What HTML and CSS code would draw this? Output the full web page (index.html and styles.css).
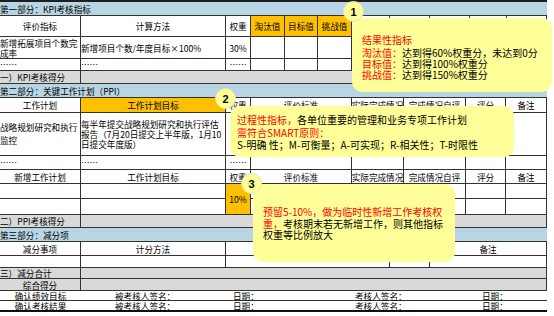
FILE: index.html
```html
<!DOCTYPE html>
<html lang="zh-CN">
<head>
<meta charset="utf-8">
<title>KPI考核表</title>
<link rel="stylesheet" href="styles.css">
</head>
<body>
<div class="page">
  <div class="sheet">
    <div class="topbar"></div>

    <div class="title h14">第一部分：KPI考核指标</div>
    <div class="row g1 h21">
      <div class="ctr">评价指标</div><div class="ctr">计算方法</div><div class="ctr">权重</div>
      <div class="ctr org">淘汰值</div><div class="ctr org">目标值</div><div class="ctr org">挑战值</div>
      <div></div><div></div><div></div><div></div><div></div>
    </div>
    <div class="row g1 h22">
      <div>新增拓展项目个数完<br>成率</div><div>新增项目个数/年度目标×100%</div><div class="ctr">30%</div>
      <div></div><div></div><div></div><div></div><div></div><div></div><div></div><div></div>
    </div>
    <div class="row g1 h12">
      <div class="dots">……</div><div class="dots">……</div><div class="dots ctr">……</div>
      <div></div><div></div><div></div><div></div><div></div><div></div><div></div><div></div>
    </div>
    <div class="row gs h13 gray"><div>一）KPI考核得分</div><div></div></div>

    <div class="title h14">第二部分：关键工作计划（PPI）</div>
    <div class="row g2 h15">
      <div class="ctr">工作计划</div><div class="ctr org">工作计划目标</div><div class="ctr">权重</div>
      <div class="ctr">评价标准</div><div class="ctr">实际完成情况</div><div class="ctr">完成情况自评</div>
      <div class="ctr">评分</div><div class="ctr">备注</div>
    </div>
    <div class="row g2 h43">
      <div class="lh13">战略规划研究和执行<br>监控</div>
      <div>每半年提交战略规划研究和执行评估<br>报告（7月20日提交上半年版，1月10<br>日提交年度版）</div>
      <div></div><div></div><div></div><div></div><div></div><div></div>
    </div>
    <div class="row g2 h14">
      <div class="dots">……</div><div class="dots">……</div><div class="dots ctr">……</div>
      <div></div><div></div><div></div><div></div><div></div>
    </div>
    <div class="block g2">
      <div class="ctr">新增工作计划</div><div class="ctr">工作计划目标</div><div class="ctr">权重</div>
      <div class="ctr">评价标准</div><div class="ctr">实际完成情况</div><div class="ctr">完成情况自评</div>
      <div class="ctr">评分</div><div class="ctr">备注</div>
      <div></div><div></div><div class="ctr org span2">10%</div><div></div><div></div><div></div><div></div><div></div>
      <div></div><div></div><div></div><div></div><div></div><div></div><div></div>
    </div>
    <div class="row gs h13 gray"><div>二）PPI考核得分</div><div></div></div>

    <div class="title h14">第三部分：减分项</div>
    <div class="row g3 h14">
      <div class="ctr">减分事项</div><div class="ctr">计分方法</div><div class="ctr">扣分标准</div><div class="ctr">扣分</div><div class="ctr">备注</div>
    </div>
    <div class="row g3 h12">
      <div></div><div></div><div></div><div></div><div></div>
    </div>
    <div class="row gs h11 gray"><div>三）减分合计</div><div></div></div>
    <div class="row gs h12 gray"><div class="ctr">综合得分</div><div></div></div>
    <div class="sign h10">
      <div class="ctr">确认绩效目标</div><div class="ind">被考核人签名：</div><div>日期：</div><div>考核人签名：</div><div>日期：</div>
    </div>
    <div class="sign h10 last">
      <div class="ctr">确认考核结果</div><div class="ind">被考核人签名：</div><div>日期：</div><div>考核人签名：</div><div>日期：</div>
    </div>
  </div>

  <div class="tip tip1">
    <p class="red first">结果性指标</p>
    <p><span class="red">淘汰值：</span>达到得60%权重分，未达到0分</p>
    <p><span class="red">目标值：</span>达到得100%权重分</p>
    <p><span class="red">挑战值：</span>达到得150%权重分</p>
  </div>
  <div class="tip tip2">
    <p><span class="red">过程性指标，</span>各单位重要的管理和业务专项工作计划</p>
    <p class="red">需符合SMART原则：</p>
    <p>S-明确 性；M-可衡量；A-可实现；R-相关性；T-时限性</p>
  </div>
  <div class="tip tip3">
    <p class="red">预留5-10%，做为临时性新增工作考核权</p>
    <p><span class="red">重，</span>考核期末若无新增工作，则其他指标</p>
    <p>权重等比例放大</p>
  </div>

  <div class="badge b1">1</div>
  <div class="badge b2">2</div>
  <div class="badge b3">3</div>
</div>
</body>
</html>
```

FILE: styles.css
```css
* { box-sizing: border-box; margin: 0; padding: 0; }

body {
  margin: 0;
  width: 554px;
  height: 316px;
  overflow: hidden;
  background: #fff;
  color: #000;
  font-family: "Noto Sans CJK SC", "Noto Sans", sans-serif;
  font-size: 8.6px;
}

.page { position: relative; width: 554px; height: 316px; }

.sheet { width: 547px; }

.topbar { height: 2px; background: #1e1e1e; }

.title {
  display: flex;
  align-items: center;
  background: #b8d5e3;
  border-bottom: 1px solid #333;
  white-space: nowrap;
  line-height: 10px;
}

.row { display: grid; }
.row > div,
.block > div {
  display: flex;
  align-items: center;
  border-right: 1px solid #333;
  border-bottom: 1px solid #333;
  white-space: nowrap;
  overflow: hidden;
  line-height: 10px;
}

.g1 { grid-template-columns: 81px 145px 25px 34px 33px 34px 38px 40px 40px 37px 40px; }
.g2 { grid-template-columns: 81px 145px 25px 101px 52px 62px 40px 41px; }
.g3 { grid-template-columns: 81px 145px 164px 40px 117px; }
.gs { grid-template-columns: 81px 1fr; }

.block { display: grid; grid-template-rows: 14px 15px 16px; }
.span2 { grid-row: span 2; }

.h10 { height: 10px; }
.h11 { height: 11px; }
.h12 { height: 12px; }
.h13 { height: 13px; }
.h14 { height: 14px; }
.h15 { height: 15px; }
.h21 { height: 21px; }
.h22 { height: 22px; }
.h43 { height: 43px; }

.ctr { justify-content: center; text-align: center; }
.org { background: #ffc000; }
.gray { background: #d9d9d9; }
.dots { align-items: flex-end; padding-bottom: 1px; }
.lh13 { line-height: 13px !important; }

.sign {
  display: grid;
  grid-template-columns: 81px 152px 122px 127px 1fr;
  border-bottom: 1px solid #333;
}
.sign > div { display: flex; align-items: center; white-space: nowrap; line-height: 10px; }
.sign .ind { padding-left: 34px; }
.sign.last { border-bottom: 2px solid #111; height: 11px; }

.tip {
  position: absolute;
  background: #ffff99;
  border-radius: 10px;
  font-size: 10px;
  white-space: nowrap;
}
.tip p { line-height: 11px; }
.red { color: #ff0000; }

.tip1 { left: 352px; top: 18px; width: 200px; height: 74px; padding: 16px 0 0 10px; }
.tip1 .first { margin-bottom: 2px; }
.tip2 { left: 230px; top: 106px; width: 284px; height: 51px; padding: 8px 0 0 7px; }
.tip2 p { line-height: 12.5px; }
.tip3 { left: 253px; top: 184px; width: 202px; height: 78px; padding: 22px 0 0 10px; }
.tip3 p { line-height: 11.5px; }

.badge {
  position: absolute;
  width: 21px;
  height: 21px;
  border-radius: 50%;
  background: #ffff99;
  border: 1px solid #e4e4b0;
  display: flex;
  align-items: center;
  justify-content: center;
  font-family: "Liberation Sans", sans-serif;
  font-weight: bold;
  font-size: 11px;
}
.b1 { left: 343px; top: 1px; }
.b2 { left: 215px; top: 88px; }
.b3 { left: 241px; top: 173px; }
```
